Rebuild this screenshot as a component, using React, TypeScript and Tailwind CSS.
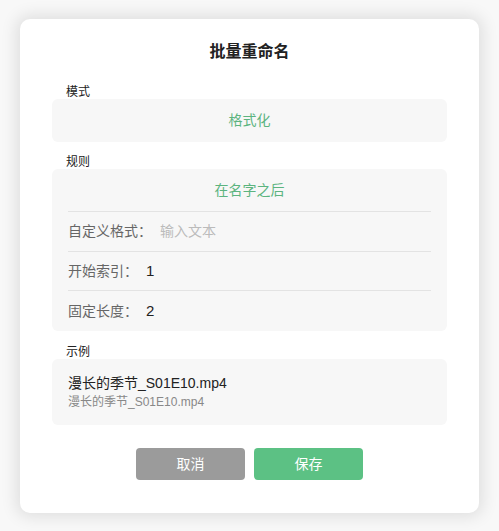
import React from 'react';

const font = { fontFamily: '"Liberation Sans", "Noto Sans CJK SC", sans-serif' };

function Label({ children }: { children: React.ReactNode }) {
  return <div className="pl-[14px] text-[12px] leading-[14px] text-[#222]">{children}</div>;
}

function Row({ label, children }: { label: string; children: React.ReactNode }) {
  return (
    <div className="flex items-center border-t border-[#e3e3e3] text-[14px]">
      <span className="text-[#666]">{label}</span>
      <span className="ml-2">{children}</span>
    </div>
  );
}

export default function App() {
  return (
    <div className="h-[531px] w-[499px] bg-[#f8f8f8] pl-[20px] pt-[19px]" style={font}>
      <div className="flex w-[459px] flex-col rounded-[10px] bg-white px-[32px] pb-[33px] pt-[22px] shadow-[0_0_16px_4px_rgba(0,0,0,0.1)]">
        <div className="text-center text-[16px] font-bold leading-[22px] text-[#222]">批量重命名</div>

        <div className="mt-[22px]">
          <Label>模式</Label>
          <div className="flex h-[43px] items-center justify-center rounded-[6px] bg-[#f7f7f7] text-[14px] text-[#5cb47f]">
            格式化
          </div>
        </div>

        <div className="mt-[13px]">
          <Label>规则</Label>
          <div className="grid grid-rows-[42px_40px_39px_41px] rounded-[6px] bg-[#f7f7f7] px-[16px]">
            <div className="flex items-center justify-center text-[14px] text-[#5cb47f]">在名字之后</div>
            <Row label="自定义格式：">
              <span className="text-[#bbb]">输入文本</span>
            </Row>
            <Row label="开始索引：">
              <span className="text-[15px] text-[#222]">1</span>
            </Row>
            <Row label="固定长度：">
              <span className="text-[15px] text-[#222]">2</span>
            </Row>
          </div>
        </div>

        <div className="mt-[14px]">
          <Label>示例</Label>
          <div className="flex h-[66px] flex-col justify-center rounded-[6px] bg-[#f7f7f7] px-[16px]">
            <div className="text-[14px] leading-[20px] text-[#222]">漫长的季节_S01E10.mp4</div>
            <div className="text-[12px] leading-[18px] text-[#888]">漫长的季节_S01E10.mp4</div>
          </div>
        </div>

        <div className="mt-[23px] flex justify-center gap-[9px]">
          <button className="h-[32px] w-[109px] rounded-[4px] bg-[#9b9b9b] text-[14px] text-white">取消</button>
          <button className="h-[32px] w-[109px] rounded-[4px] bg-[#5cc184] text-[14px] text-white">保存</button>
        </div>
      </div>
    </div>
  );
}
